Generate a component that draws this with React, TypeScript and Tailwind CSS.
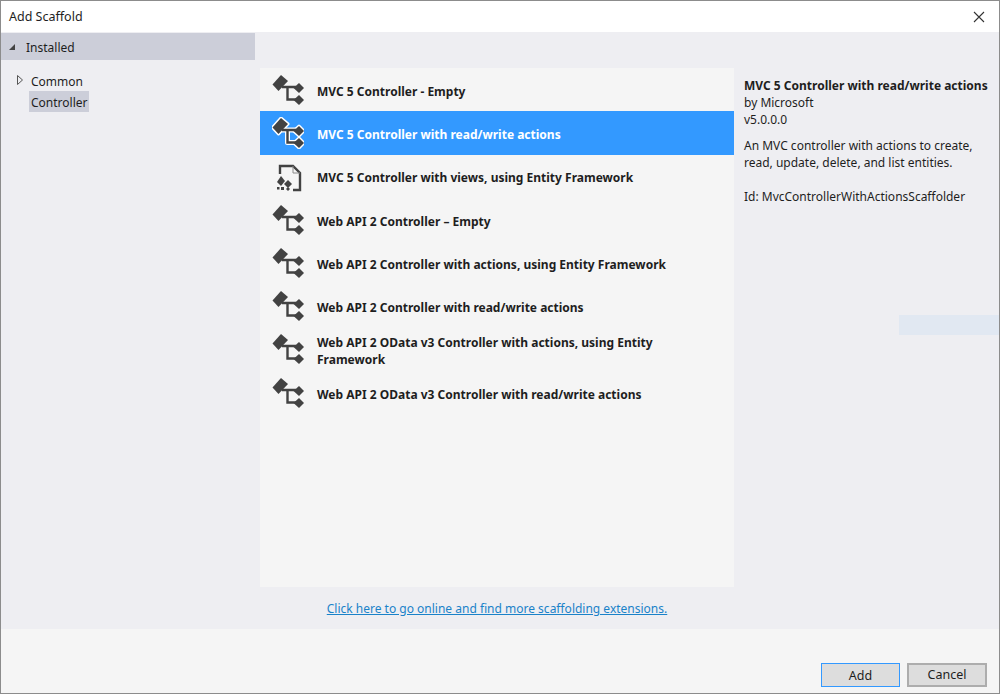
import React from 'react';

const scaffolders = [
    { label: 'MVC 5 Controller - Empty', icon: 'controller' },
    { label: 'MVC 5 Controller with read/write actions', icon: 'controller', selected: true },
    { label: 'MVC 5 Controller with views, using Entity Framework', icon: 'file' },
    { label: 'Web API 2 Controller – Empty', icon: 'controller' },
    { label: 'Web API 2 Controller with actions, using Entity Framework', icon: 'controller' },
    { label: 'Web API 2 Controller with read/write actions', icon: 'controller' },
    { label: 'Web API 2 OData v3 Controller with actions, using Entity Framework', icon: 'controller' },
    { label: 'Web API 2 OData v3 Controller with read/write actions', icon: 'controller' },
];

function ControllerIcon({ selected }: { selected?: boolean }) {
    const body = (
        <>
            <path d="M0.5 10.5 L9 1 L16 7 L6.5 17 Z" />
            <path d="M21.5 14 L27 9 L32 14 L27 19 Z" />
            <path d="M21.5 26 L27 21 L32 26 L27 31 Z" />
        </>
    );
    const wire = 'M10 13 H24 M15.5 13 V25.5 H24';
    return (
        <svg width="32" height="32" viewBox="0 0 32 32" className="shrink-0">
            {selected && (
                <g fill="#ffffff" stroke="#ffffff" strokeWidth="3" strokeLinejoin="round">
                    {body}
                    <path d={wire} fill="none" strokeWidth="5" />
                </g>
            )}
            <g fill="#424242">{body}</g>
            <path d={wire} fill="none" stroke="#424242" strokeWidth="2.4" />
        </svg>
    );
}

function FileIcon() {
    return (
        <svg width="32" height="32" viewBox="0 0 32 32" className="shrink-0">
            <path d="M8 14 V6 H21 L28 13 V30 H21" fill="none" stroke="#424242" strokeWidth="2.4" />
            <path d="M21 6 V13 H28" fill="none" stroke="#8a8a8a" strokeWidth="1" />
            <g fill="#424242">
                <path d="M5 22 L9 16 L13 21 L9 26 Z" />
                <path d="M12 24 L16 20 L20 24 L16 28 Z" />
                <path d="M14 29 L16 27 L18 29 L16 31 Z" />
                <rect x="9" y="27" width="3" height="3" />
                <rect x="5" y="27" width="2.5" height="2.5" />
            </g>
        </svg>
    );
}

export default function App() {
    return (
        <div className="relative w-[1000px] h-[694px] flex flex-col overflow-hidden border border-[#8c8c8c] bg-[#eeeef2] text-[12px] text-[#1e1e1e] font-['Noto_Sans',sans-serif]">
            {/* Title bar */}
            <div className="h-[31px] shrink-0 bg-white flex items-center justify-between pl-2 pr-[14px]">
                <span className="text-[12.5px] mt-[2px]">Add Scaffold</span>
                <svg width="12" height="12" viewBox="0 0 12 12">
                    <path d="M1 1 L11 11 M11 1 L1 11" stroke="#333333" strokeWidth="1.1" />
                </svg>
            </div>

            <div className="flex-1 flex min-h-0">
                {/* Left tree */}
                <div className="w-[254px] shrink-0">
                    <div className="h-[27px] mt-px bg-[#ccced9] flex items-center pl-[8px] gap-[11px]">
                        <svg width="6" height="6" viewBox="0 0 6 6">
                            <path d="M6 0 V6 H0 Z" fill="#444444" />
                        </svg>
                        <span className="mt-[2px]">Installed</span>
                    </div>
                    <div className="mt-[10px] pl-[16px]">
                        <div className="flex items-center gap-[8px] h-[21px]">
                            <svg width="6" height="10" viewBox="0 0 6 10" className="-mt-[2px]">
                                <path d="M0.5 0.5 L5.5 5 L0.5 9.5 Z" fill="none" stroke="#555555" />
                            </svg>
                            <span className="mt-[2px]">Common</span>
                        </div>
                        <div className="ml-[12px] w-[60px] h-[21px] bg-[#ccced9] flex items-center pl-[2px]">
                            <span className="mt-[2px]">Controller</span>
                        </div>
                    </div>
                </div>

                {/* List */}
                <div className="w-[474px] ml-[5px] shrink-0 flex flex-col pt-[36px]">
                    <div className="h-[519px] bg-[#f5f5f5]">
                        {scaffolders.map((s) => (
                            <div
                                key={s.label}
                                className={`h-[43.3px] flex items-center pl-[12px] pr-[60px] gap-[13px] font-bold leading-[17px] ${
                                    s.selected ? 'bg-[#3399ff] text-white' : ''
                                }`}
                            >
                                {s.icon === 'file' ? <FileIcon /> : <ControllerIcon selected={s.selected} />}
                                <span className="mt-[3px]">{s.label}</span>
                            </div>
                        ))}
                    </div>
                    <div className="mt-[13px] text-center text-[#1a82c9] underline">
                        Click here to go online and find more scaffolding extensions.
                    </div>
                </div>

                {/* Details */}
                <div className="flex-1 pl-[10px] pt-[45px] leading-[17px]">
                    <div className="font-bold whitespace-nowrap">MVC 5 Controller with read/write actions</div>
                    <div>by Microsoft</div>
                    <div>v5.0.0.0</div>
                    <p className="mt-[9px]">An MVC controller with actions to create,<br />read, update, delete, and list entities.</p>
                    <p className="mt-[17px] whitespace-nowrap">Id: MvcControllerWithActionsScaffolder</p>
                </div>
            </div>

            {/* Footer */}
            <div className="h-[64px] shrink-0 bg-[#f5f5f5] flex items-end justify-end gap-[7px] pr-[12px] pb-[6px] text-[12.5px]">
                <button className="w-[79px] h-[24px] pt-[2px] bg-[#dddddd] border border-[#3399ff]">Add</button>
                <button className="w-[80px] h-[24px] pt-[1px] bg-[#dddddd] border-2 border-[#adadad]">Cancel</button>
            </div>

            {/* Stray highlight over the details pane */}
            <div className="absolute left-[898px] top-[314px] w-[102px] h-[20px] bg-[#e1e8f2]" />
        </div>
    );
}
